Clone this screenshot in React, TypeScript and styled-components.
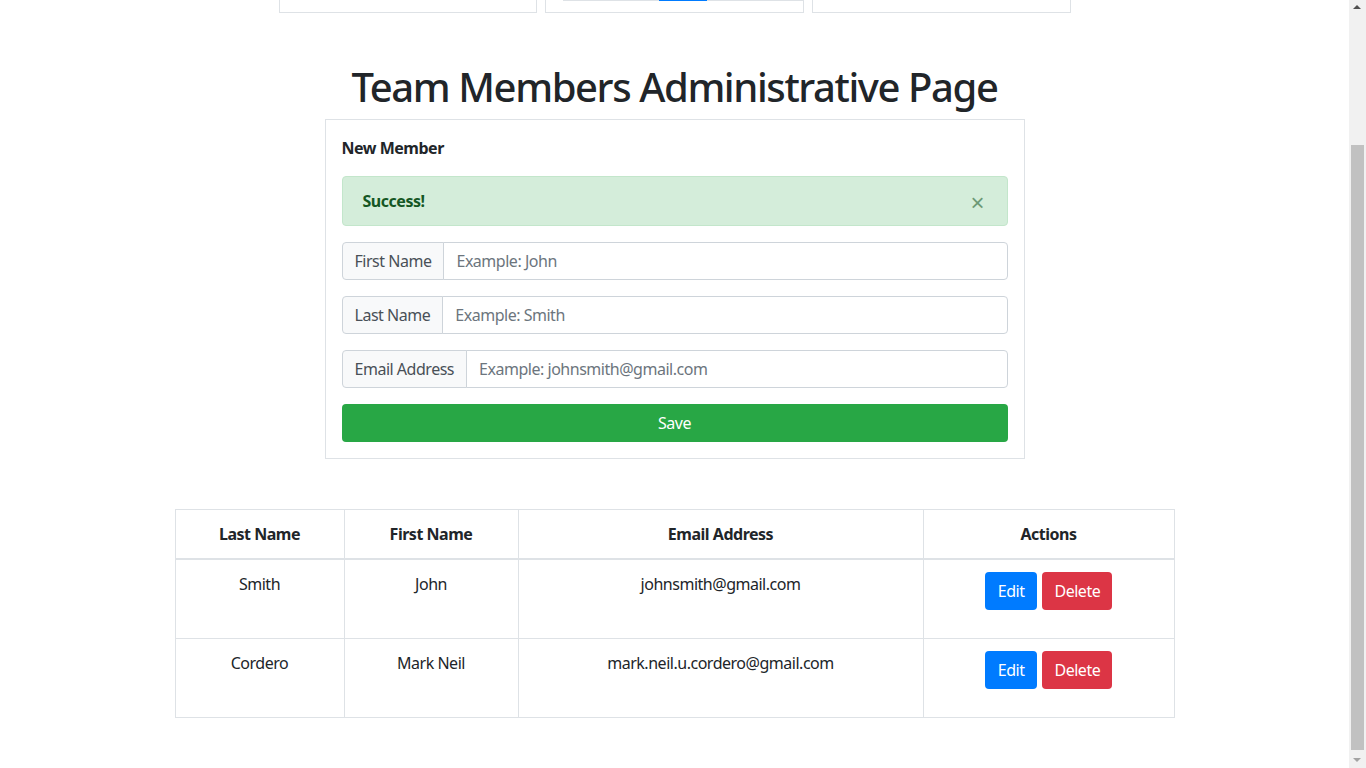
import React, { useLayoutEffect, useRef, useState } from 'react'
import styled, { createGlobalStyle } from 'styled-components'

interface Member {
  lastName: string
  firstName: string
  email: string
}

const members: Member[] = [
  { lastName: 'Smith', firstName: 'John', email: 'johnsmith@gmail.com' },
  { lastName: 'Cordero', firstName: 'Mark Neil', email: 'mark.neil.u.cordero@gmail.com' },
]

const fields = [
  { label: 'First Name', placeholder: 'Example: John' },
  { label: 'Last Name', placeholder: 'Example: Smith' },
  { label: 'Email Address', placeholder: 'Example: johnsmith@gmail.com' },
]

const ARROW = 17

const App: React.FC = () => {
  const shellRef = useRef<HTMLDivElement>(null)
  const [thumb, setThumb] = useState({ top: ARROW, height: 0 })

  useLayoutEffect(() => {
    const el = shellRef.current
    if (!el) return
    el.scrollTop = 163
    const track = el.clientHeight - ARROW * 2
    setThumb({
      top: ARROW + (el.scrollTop / el.scrollHeight) * track,
      height: (el.clientHeight / el.scrollHeight) * track,
    })
  }, [])

  return (
    <>
      <GlobalStyle />
      <Shell ref={shellRef}>
        <Page>
          <StatRow>
            <StatCard $width={258} />
            <StatCard $width={259}>
              <TabLine>
                <TabMarker />
              </TabLine>
            </StatCard>
            <StatCard $width={259} />
          </StatRow>

          <Title>Team Members Administrative Page</Title>

          <FormCard>
            <FormHeading>New Member</FormHeading>
            <Alert>
              <strong>Success!</strong>
              <CloseButton type='button' aria-label='Close'>×</CloseButton>
            </Alert>
            {
              fields.map(({ label, placeholder }) => (
                <InputGroup key={label}>
                  <Prepend>{label}</Prepend>
                  <Input placeholder={placeholder} />
                </InputGroup>
              ))
            }
            <SaveButton type='button'>Save</SaveButton>
          </FormCard>

          <Table>
            <thead>
              <tr>
                <Th $width={169}>Last Name</Th>
                <Th $width={174}>First Name</Th>
                <Th $width={405}>Email Address</Th>
                <Th>Actions</Th>
              </tr>
            </thead>
            <tbody>
              {
                members.map((member) => (
                  <tr key={member.email}>
                    <Td>{member.lastName}</Td>
                    <Td>{member.firstName}</Td>
                    <Td>{member.email}</Td>
                    <Td>
                      <Actions>
                        <ActionButton $variant='edit'>Edit</ActionButton>
                        <ActionButton $variant='delete'>Delete</ActionButton>
                      </Actions>
                    </Td>
                  </tr>
                ))
              }
            </tbody>
          </Table>
        </Page>
      </Shell>
      <ScrollTrack aria-hidden='true'>
        <ArrowUp />
        <ScrollThumb style={{ top: thumb.top, height: thumb.height }} />
        <ArrowDown />
      </ScrollTrack>
    </>
  )
}

const GlobalStyle = createGlobalStyle`
  html, body {
    margin: 0;
    overflow: hidden;
  }
  body {
    font-family: "Noto Sans", "Open Sans", sans-serif;
    font-size: 16px;
    line-height: 1.5;
    letter-spacing: -0.03em;
    color: #212529;
    background: #fff;
  }
  * {
    box-sizing: border-box;
  }
`

const Shell = styled.div`
  height: 100vh;
  overflow-y: scroll;
  scrollbar-width: none;

  &::-webkit-scrollbar {
    display: none;
  }
`

const Page = styled.div`
  padding: 15px 17px 51px 0;
  display: flex;
  flex-direction: column;
  align-items: center;
`

const ScrollTrack = styled.div`
  position: fixed;
  top: 0;
  right: 0;
  width: 17px;
  height: 100vh;
  background: #f1f1f1;
`

const ScrollThumb = styled.div`
  position: absolute;
  left: 2px;
  right: 2px;
  background: #c1c1c1;
`

const Arrow = styled.div`
  position: absolute;
  left: 4px;
  width: 0;
  height: 0;
  border-left: 4px solid transparent;
  border-right: 4px solid transparent;
`

const ArrowUp = styled(Arrow)`
  top: 5px;
  border-bottom: 4px solid #505050;
`

const ArrowDown = styled(Arrow)`
  bottom: 6px;
  border-top: 4px solid #a3a3a3;
`

const StatRow = styled.div`
  display: flex;
  gap: 8px;
`

const StatCard = styled.div<{ $width: number }>`
  width: ${({ $width }) => $width}px;
  height: 161px;
  border: 1px solid #dee2e6;
  padding: 16px 0 11px 17px;
  display: flex;
  flex-direction: column;
`

const TabLine = styled.div`
  margin-top: auto;
  height: 1px;
  background: #dee2e6;
  padding-left: 96px;
`

const TabMarker = styled.div`
  width: 48px;
  height: 1px;
  background: #007bff;
`

const Title = styled.h1`
  margin: 50px 0 8px;
  font-size: 40px;
  font-weight: 500;
  line-height: 1.2;
  letter-spacing: -0.035em;
`

const FormCard = styled.div`
  width: 700px;
  border: 1px solid #dee2e6;
  padding: 16px;
`

const FormHeading = styled.div`
  font-weight: 700;
  margin: 0 0 16px;
`

const Alert = styled.div`
  display: flex;
  align-items: center;
  justify-content: space-between;
  height: 50px;
  padding: 12px 20px;
  margin-bottom: 16px;
  background: #d4edda;
  border: 1px solid #c3e6cb;
  border-radius: 4px;
  color: #155724;
`

const CloseButton = styled.button`
  border: 0;
  background: transparent;
  padding: 0;
  margin-right: 2px;
  margin-top: 3px;
  font-family: "Liberation Sans", Arial, sans-serif;
  font-size: 24px;
  font-weight: 400;
  line-height: 1;
  color: #155724;
  opacity: 0.55;
`

const InputGroup = styled.div`
  display: flex;
  height: 38px;
  margin-bottom: 16px;
`

const Prepend = styled.span`
  display: flex;
  align-items: center;
  padding: 0 12px;
  background: #f8f9fa;
  border: 1px solid #ced4da;
  border-radius: 4px 0 0 4px;
  color: #495057;
  white-space: nowrap;
`

const Input = styled.input`
  flex: 1;
  min-width: 0;
  margin-left: -1px;
  padding: 0 12px;
  border: 1px solid #ced4da;
  border-radius: 0 4px 4px 0;
  font: inherit;
  letter-spacing: inherit;
  color: #495057;

  &::placeholder {
    color: #6c757d;
  }
`

const SaveButton = styled.button`
  width: 100%;
  height: 38px;
  border: 0;
  border-radius: 4px;
  background: #28a745;
  color: #fff;
  font: inherit;
  letter-spacing: inherit;
`

const Table = styled.table`
  width: 1000px;
  margin-top: 50px;
  border-collapse: collapse;
  border: 1px solid #dee2e6;
`

const Th = styled.th<{ $width?: number }>`
  width: ${({ $width }) => ($width ? `${$width}px` : 'auto')};
  padding: 12px;
  border: 1px solid #dee2e6;
  border-bottom-width: 2px;
  font-weight: 700;
  text-align: center;
`

const Td = styled.td`
  height: 79px;
  padding: 12px;
  border: 1px solid #dee2e6;
  text-align: center;
  vertical-align: top;
`

const Actions = styled.div`
  display: flex;
  justify-content: center;
  gap: 5px;
`

const ActionButton = styled.button<{ $variant: 'edit' | 'delete' }>`
  height: 38px;
  padding: 0 ${({ $variant }) => ($variant === 'edit' ? 13 : 12)}px;
  border: 0;
  border-radius: 4px;
  background: ${({ $variant }) => ($variant === 'edit' ? '#007bff' : '#dc3545')};
  color: #fff;
  font: inherit;
  letter-spacing: inherit;
`

export default App
